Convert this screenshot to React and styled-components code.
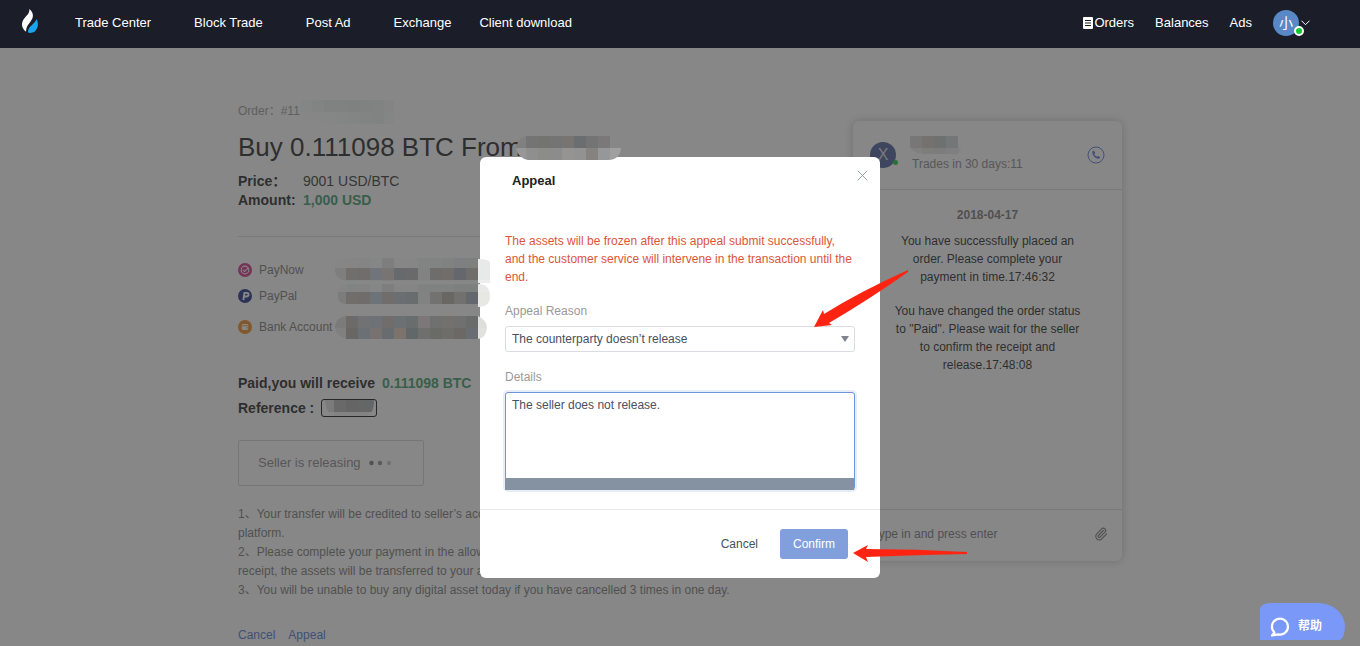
import React from 'react';
import styled, { createGlobalStyle } from 'styled-components';
import { Paperclip } from 'lucide-react';

const GlobalStyle = createGlobalStyle`
  *, *::before, *::after { box-sizing: border-box; }
  body {
    margin: 0;
    background: #fff;
    color: #222;
    font: 12px/18px "Liberation Sans", "Noto Sans CJK SC", sans-serif;
  }
  button, select, textarea, input { font: inherit; color: inherit; }
  h1, h2, p, dl, dd, ul, ol { margin: 0; padding: 0; }
  ul, ol { list-style: none; }
  a { text-decoration: none; color: inherit; }
`;

const Header = styled.header`
  position: sticky;
  top: 0;
  z-index: 5;
  display: flex;
  align-items: center;
  justify-content: space-between;
  height: 48px;
  padding: 0 50px 3px 22px;
  background: #1b1d29;
  color: #fff;
  font-size: 13px;
`;

const Nav = styled.nav`
  display: flex;
  align-items: center;
  gap: ${(p) => p.$gap}px;
`;

const Brand = styled.a`
  display: flex;
  width: 16px;
  margin: -4px -6px 0 0;
`;

const NavLink = styled.a`
  display: flex;
  align-items: center;
  gap: 1px;
  margin-left: ${(p) => (p.$tight ? -15 : 0)}px;
`;

const AccountButton = styled.button`
  display: flex;
  align-items: center;
  gap: 2px;
  padding: 0;
  border: 0;
  background: none;
`;

const Avatar = styled.span`
  position: relative;
  display: flex;
  align-items: center;
  justify-content: center;
  width: 26px;
  height: 26px;
  border-radius: 50%;
  background: ${(p) => p.$color};
  color: ${(p) => p.$ink};
  font-size: ${(p) => p.$size}px;
`;

const Online = styled.i`
  position: absolute;
  right: ${(p) => (p.$ring ? -5 : -2)}px;
  bottom: ${(p) => (p.$ring ? 0 : 3)}px;
  width: ${(p) => (p.$ring ? 10 : 5)}px;
  height: ${(p) => (p.$ring ? 10 : 5)}px;
  border: ${(p) => (p.$ring ? 2 : 0)}px solid #fff;
  border-radius: 50%;
  background: #0fca32;
`;

const Main = styled.main`
  display: grid;
  grid-template-columns: minmax(0, 1fr) 269px;
  column-gap: 55px;
  align-items: start;
  max-width: 884px;
  margin: 0 auto;
  padding-top: 54px;
`;

const OrderNumber = styled.p`
  color: #9b9b9b;
`;

const OrderTitle = styled.h1`
  margin: 9px 0 7px;
  font-size: 26px;
  line-height: 36px;
  font-weight: 400;
`;

const Summary = styled.dl`
  display: grid;
  grid-template-columns: 65px 1fr;
  padding-bottom: 26px;
  border-bottom: 1px solid #ddd;
  font-size: 14px;
  line-height: 19px;
  dt { font-weight: 700; }
  dd { color: #333; }
`;

const Green = styled.strong`
  color: #3c9a68;
`;

const Methods = styled.ul`
  padding: 23px 0 36px;
`;

const Method = styled.li`
  display: flex;
  align-items: center;
  gap: 7px;
  height: 20px;
  margin-bottom: ${(p) => p.$after}px;
  color: #777;
`;

const Strong = styled.p`
  display: flex;
  align-items: center;
  gap: 7px;
  height: 20px;
  margin-bottom: 5px;
  font-size: 14px;
  font-weight: 700;
`;

const ReferenceCode = styled.span`
  width: 56px;
  height: 18px;
  border: 1px solid #111;
  border-radius: 3px;
`;

const Status = styled.button`
  display: flex;
  align-items: center;
  gap: 8px;
  width: 186px;
  height: 46px;
  margin-top: 22px;
  padding: 0 19px;
  border: 1px solid #d5d5d5;
  border-radius: 2px;
  background: none;
  color: #888;
  font-size: 13px;
`;

const Notes = styled.ol`
  padding: 19px 0 26px;
  color: #777;
  line-height: 19px;
  white-space: nowrap;
  span { display: block; }
`;

const Actions = styled.div`
  display: flex;
  gap: 13px;
  color: #5375d2;
`;

const Chat = styled.section`
  display: flex;
  flex-direction: column;
  min-height: 440px;
  margin-top: 19px;
  border-radius: 6px;
  box-shadow: 0 0 10px rgba(0, 0, 0, 0.24);
`;

const ChatHeader = styled.header`
  display: grid;
  grid-template-columns: 26px 1fr 18px;
  column-gap: 16px;
  align-items: center;
  height: 69px;
  padding: 0 17px;
  border-bottom: 1px solid #ddd;
`;

const ChatStats = styled.p`
  padding-top: 17px;
  color: #888;
`;

const Messages = styled.div`
  flex: 1;
  display: flex;
  flex-direction: column;
  gap: 16px;
  padding: 16px 40px;
  text-align: center;
  time { margin-bottom: -8px; color: #777; font-weight: 700; }
  p { margin: 0 -2px; }
`;

const ChatForm = styled.form`
  display: flex;
  align-items: center;
  height: 52px;
  padding: 0 14px 3px 17px;
  border-top: 1px solid #ddd;
  input {
    flex: 1;
    min-width: 0;
    padding: 0 2px;
    border: 0;
    background: none;
  }
  input::placeholder { color: #777; opacity: 1; }
`;

const Mask = styled.div`
  position: fixed;
  inset: 0;
  z-index: 2;
  display: flex;
  align-items: flex-start;
  justify-content: center;
  padding-top: 157px;
  background: rgba(55, 55, 55, 0.6);
`;

const Dialog = styled.section`
  width: 400px;
  border-radius: 6px;
  background: #fff;
`;

const DialogHeader = styled.header`
  display: flex;
  justify-content: space-between;
  padding: 13px 12px 0 32px;
  h2 { font-size: 13px; line-height: 22px; }
`;

const Close = styled.button`
  display: flex;
  padding: 0;
  border: 0;
  background: none;
  svg { width: 11px; }
`;

const Fields = styled.div`
  display: flex;
  flex-direction: column;
  padding: 40px 25px 19px;
`;

const Warning = styled.p`
  margin: 0 -2px 16px 0;
  color: #dc5538;
`;

const Label = styled.label`
  margin-bottom: 6px;
  color: #999;
`;

const SelectBox = styled.div`
  position: relative;
  margin-bottom: 16px;
  select {
    display: block;
    width: 100%;
    height: 26px;
    padding: 0 6px;
    border: 1px solid #d9dce3;
    border-radius: 3px;
    background: #fff;
    color: #495060;
    appearance: none;
  }
  svg { position: absolute; right: 6px; top: 10px; }
`;

const DetailBox = styled.div`
  position: relative;
  textarea {
    display: block;
    width: 100%;
    height: 98px;
    padding: 3px 6px;
    border: 1px solid #6f94d8;
    border-radius: 3px;
    box-shadow: 0 0 0 2px #e6ecf8;
    color: #495060;
    outline: 0;
    resize: none;
  }
  &::after {
    content: '';
    position: absolute;
    inset: auto 1px 0 0;
    height: 12px;
    background: #8592a1;
  }
`;

const DialogFooter = styled.footer`
  display: flex;
  justify-content: flex-end;
  gap: 9px;
  padding: 19px 32px;
  border-top: 1px solid #e6e8ea;
`;

const DialogButton = styled.button`
  height: 30px;
  padding: 0 13px;
  border: 0;
  border-radius: 3px;
  background: ${(p) => (p.$primary ? '#819fdc' : 'transparent')};
  color: ${(p) => (p.$primary ? '#fff' : '#495060')};
`;

const Annotations = styled.svg`
  position: absolute;
  top: 0;
  left: calc(50% - 442px);
  z-index: 3;
  pointer-events: none;
`;

const Help = styled.button`
  position: fixed;
  right: 15px;
  bottom: 6px;
  z-index: 4;
  display: flex;
  align-items: center;
  gap: 8px;
  width: 85px;
  height: 37px;
  padding: 9px 10px 0;
  border: 0;
  border-radius: 10px 28px 6px 0 / 6px 24px 14px 0;
  background: #7a98f7;
  color: #fff;
  font-weight: 700;
`;

const methods = [
  { name: 'PayNow', after: 6, color: '#d12d86', glyph: <><circle cx="6.5" cy="6.5" r="3.6" /><path d="M4.6 6.3l1.6 1.6 3.2-3.4" /></> },
  { name: 'PayPal', after: 11, color: '#1f2d8a', glyph: <path d="M5 10.2L6 3.6h2.2c2.4 0 2 3.4-.4 3.4H5.7" strokeWidth="1.8" /> },
  { name: 'Bank Account', after: 0, color: '#f0881e', glyph: <><rect x="3.500" y="3.800" width="6" height="5.400" rx="1" fill="#fff" stroke="none" /><path d="M3.500 5.300h6M7.500 7.300h1.500" stroke="#f0881e" strokeWidth=".8" /></> },
];

// Each patch hides a private value: origin, tile size, rows of tile colours and an outline.
const patches = [
  { id: 'order', x: 300, y: 100, w: 12, h: 12, shape: 'M303 100H394V124H345Q301 123 300 110Q300 102 303 100Z',
    rows: [['#848686', '#828484', '#808282', '#808282', '#7f8181', '#7f8281', '#818282', '#848484'], ['#868686', '#868686', '#858686', '#848585', '#838585', '#828484', '#818383', '#848585']] },
  { id: 'name', x: 514, y: 136, w: 12, h: 12, shape: 'M526 136H610V148H621Q620 160 608 160H528Q518 158 516 148Q518 138 526 136Z',
    rows: [['#808080', '#747474', '#737372', '#747474', '#777472', '#6a6e70', '#747474', '#7a7878', '#858585'], ['#979797', '#8f8f8f', '#8c8c8b', '#8d8c8c', '#969492', '#929292', '#858280', '#969799', '#a0a0a0']] },
  { id: 'paynow', x: 334, y: 256, w: 12, h: 12, shape: 'M346 258H478V259Q490 259 490 263V283H478V281H350Q335 281 335 269Q335 259 346 258Z',
    rows: [['#868686', '#848584', '#838483', '#858686', '#7e7e7f', '#868686', '#868686', '#828483', '#828383', '#808282', '#7d7f80', '#7e8080', '#e8eaea'], ['#7e7e7e', '#706f6e', '#716d6d', '#71757a', '#777473', '#666a6d', '#6a6a6a', '#828282', '#6f6d6b', '#716d6a', '#64676e', '#706e6d', '#e8e9e9'], ['#858585', '#858585', '#858585', '#858585', '#808181', '#858585', '#858585', '#858585', '#858585', '#858585', '#858585', '#858585', '#eeeeee']] },
  { id: 'paypal', x: 334, y: 280, w: 12, h: 12, shape: 'M348 284H478Q490 284 490 296Q490 307 478 307V304H346Q337 304 338 292Q340 285 348 284Z',
    rows: [['#858585', '#828383', '#838383', '#858686', '#7e7e7e', '#858585', '#858585', '#808181', '#808181', '#808181', '#7e8080', '#7e8080', '#e9e9e8'], ['#7c7c7c', '#706d6b', '#706c6c', '#6e7377', '#706d6c', '#6b6f73', '#6a6d6e', '#828282', '#727271', '#696764', '#737170', '#64676b', '#e7e7e4'], ['#858585', '#858585', '#858585', '#858585', '#858585', '#858585', '#858585', '#858585', '#858585', '#858585', '#858585', '#858585', '#e9e9e8']] },
  { id: 'bank', x: 334, y: 316, w: 12, h: 12, shape: 'M346 316H478Q487 320 487 328Q486 338 478 339H346Q335 336 335 326Q336 318 346 316Z',
    rows: [['#7b7b7b', '#6d6b69', '#707273', '#6e7277', '#706d6c', '#6b7073', '#6a6d6e', '#7c7879', '#6f7170', '#737170', '#6f706f', '#6a6c6c', '#dedfdd'], ['#808080', '#696764', '#6b7074', '#777270', '#686b70', '#7c736d', '#62676a', '#6f706e', '#696b67', '#6e6d69', '#6b6865', '#696c70', '#e1e1df']] },
  { id: 'code', x: 322, y: 400, w: 12, h: 12, shape: 'M325 400H374Q374 414 366 416H334Q326 413 325 400Z',
    rows: [['#7b7b7b', '#696969', '#656565', '#656767', '#63676a', '#808080'], ['#868686', '#838383', '#838383', '#838383', '#868686', '#868686']] },
  { id: 'trader', x: 910, y: 136, w: 12, h: 12, shape: 'M910 136H958V148H961Q960 155 955 154H925Q912 153 910 147Z',
    rows: [['#777777', '#74716e', '#6e716f', '#747778', '#828282'], ['#808080', '#7d7d7c', '#7b7c7b', '#7e7f7e', '#828282']] },
];

function Logo() {
  return (
    <svg width="16" height="24" viewBox="0 0 16 24" aria-hidden="true">
      <path d="M7.3 0C12 4 11.7 8 8.700 12.300 5.800 16.300 4.100 18.200 4.100 22.800-.8 19.500-1.200 13.600 2.300 9.400 5.500 5.700 7.800 4.300 7.300 0z" fill="#fff" />
      <path d="M14.500 10C17 14.500 16.200 19.500 12.500 22.800 10.500 24 7.500 24.300 6 23.500 5.500 17.500 12.500 15.800 14.500 10z" fill="#16a6ec" />
    </svg>
  );
}

export default function App() {
  return (
    <>
      <GlobalStyle />
      <Header>
        <Nav $gap={43} aria-label="Main">
          <Brand href="#" aria-label="Home"><Logo /></Brand>
          <NavLink href="#">Trade Center</NavLink>
          <NavLink href="#">Block Trade</NavLink>
          <NavLink href="#">Post Ad</NavLink>
          <NavLink href="#">Exchange</NavLink>
          <NavLink href="#" $tight>Client download</NavLink>
        </Nav>
        <Nav $gap={21} aria-label="Account">
          <NavLink href="#">
            <svg width="10" height="12" viewBox="0 0 10 12" aria-hidden="true">
              <rect width="10" height="12" rx="1" fill="#fff" />
              <path d="M2 3.500h6M2 6h6M2 8.500h6" stroke="#1b1d29" />
            </svg>
            Orders
          </NavLink>
          <NavLink href="#">Balances</NavLink>
          <NavLink href="#">Ads</NavLink>
          <AccountButton aria-label="Account menu">
            <Avatar $color="#5889c6" $ink="#fff" $size={14}>小<Online $ring /></Avatar>
            <svg width="9" height="6" viewBox="0 0 9 6" fill="none" stroke="#fff" aria-hidden="true"><path d="M.5.7l4 4 4-4" /></svg>
          </AccountButton>
        </Nav>
      </Header>

      <Main>
        <article>
          <OrderNumber>Order：#11</OrderNumber>
          <OrderTitle>Buy 0.111098 BTC From</OrderTitle>
          <Summary>
            <dt>Price：</dt>
            <dd>9001 USD/BTC</dd>
            <dt>Amount:</dt>
            <dd><Green>1,000 USD</Green></dd>
          </Summary>
          <Methods>
            {methods.map((m) => (
              <Method key={m.name} $after={m.after}>
                <svg width="14" height="14" viewBox="0 0 13 13" fill="none" stroke="#fff" aria-hidden="true">
                  <circle cx="6.5" cy="6.5" r="6.5" fill={m.color} stroke="none" />
                  {m.glyph}
                </svg>
                {m.name}
              </Method>
            ))}
          </Methods>
          <Strong>Paid,you will receive <Green>0.111098 BTC</Green></Strong>
          <Strong>Reference : <ReferenceCode /></Strong>
          <Status>
            Seller is releasing
            <svg width="24" height="6" viewBox="0 0 24 6" fill="#777" aria-hidden="true">
              <circle cx="2.500" cy="3" r="2.200" /><circle cx="11" cy="3" r="2.200" opacity=".8" /><circle cx="20" cy="3" r="2.200" opacity=".4" />
            </svg>
          </Status>
          <Notes>
            <li><span>1、Your transfer will be credited to seller’s account directly, the asset is held by the</span><span>platform.</span></li>
            <li><span>2、Please complete your payment in the allowed time. After the seller confirms the</span><span>receipt, the assets will be transferred to your account.</span></li>
            <li>3、You will be unable to buy any digital asset today if you have cancelled 3 times in one day.</li>
          </Notes>
          <Actions><a href="#">Cancel</a><a href="#">Appeal</a></Actions>
        </article>

        <Chat aria-label="Chat">
          <ChatHeader>
            <Avatar $color="#495a99" $ink="#ddd" $size={16}>X<Online /></Avatar>
            <ChatStats>Trades in 30 days:11</ChatStats>
            <svg width="18" height="18" viewBox="0 0 18 18" fill="none" stroke="#5a76dc" aria-hidden="true">
              <circle cx="9" cy="9" r="8" />
              <path d="M5.300 5.500l1.500-1 1.500 2.400-1 1c.5 1.300 1.500 2.200 2.800 2.800l1.100-1 2 1.500-.9 1.500c-3.600.5-7.300-3.300-7-7.200z" fill="#5a76dc" stroke="none" />
            </svg>
          </ChatHeader>
          <Messages>
            <time dateTime="2018-04-17">2018-04-17</time>
            <p>You have successfully placed an order. Please complete your payment in time.17:46:32</p>
            <p>You have changed the order status to "Paid". Please wait for the seller to confirm the receipt and release.17:48:08</p>
          </Messages>
          <ChatForm>
            <input aria-label="Message" placeholder="Type in and press enter" />
            <Paperclip size={14} color="#777" aria-hidden="true" />
          </ChatForm>
        </Chat>
      </Main>

      <Mask>
        <Dialog role="dialog" aria-modal="true" aria-labelledby="appeal-title">
          <DialogHeader>
            <h2 id="appeal-title">Appeal</h2>
            <Close aria-label="Close">
              <svg height="11" viewBox="0 0 11 11" stroke="#999fa6" aria-hidden="true"><path d="M.7.700l9.600 9.600M10.300.700L.700 10.300" /></svg>
            </Close>
          </DialogHeader>
          <Fields>
            <Warning>The assets will be frozen after this appeal submit successfully, and the customer service will intervene in the transaction until the end.</Warning>
            <Label htmlFor="reason">Appeal Reason</Label>
            <SelectBox>
              <select id="reason"><option>The counterparty doesn’t release</option></select>
              <svg width="8" height="6" viewBox="0 0 8 6" aria-hidden="true"><path d="M0 0h8L4 6z" fill="#80848f" /></svg>
            </SelectBox>
            <Label htmlFor="details">Details</Label>
            <DetailBox><textarea id="details" defaultValue="The seller does not release." /></DetailBox>
          </Fields>
          <DialogFooter>
            <DialogButton>Cancel</DialogButton>
            <DialogButton $primary>Confirm</DialogButton>
          </DialogFooter>
        </Dialog>
      </Mask>

      <Annotations width="884" height="646" viewBox="238 0 884 646" aria-hidden="true">
        {patches.map((p) => (
          <g key={p.id} clipPath={`url(#clip-${p.id})`} shapeRendering="crispEdges">
            <clipPath id={`clip-${p.id}`}><path d={p.shape} /></clipPath>
            {p.rows.map((row, r) => row.map((fill, c) => (
              <rect key={`${r}-${c}`} x={p.x + c * p.w} y={p.y + r * p.h} width={p.w} height={p.h} fill={fill} />
            )))}
          </g>
        ))}
        <path d="M908 270Q861 291 824 314L823 310 814 327 832 325 829 323Q870 299 908 272z" fill="#ff2412" />
        <path d="M853 553L868 545 866 549Q917 549 967 552V554Q917 555 866 557L868 562z" fill="#ff2412" />
      </Annotations>

      <Help>
        <svg width="20" height="21" viewBox="0 0 20 21" fill="none" stroke="#fff" strokeWidth="2.200" strokeLinejoin="round" aria-hidden="true">
          <path d="M4.500 16.500A8 8 0 1 1 8 18.400L2 19.500z" />
        </svg>
        帮助
      </Help>
    </>
  );
}
